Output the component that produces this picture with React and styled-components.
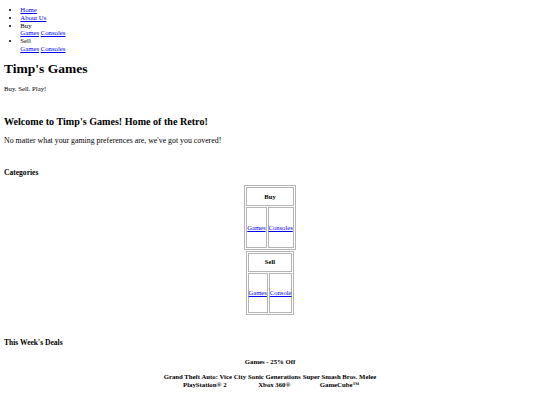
import React from 'react';
import styled, { createGlobalStyle } from 'styled-components';

const GlobalStyle = createGlobalStyle`
  html, body {
    margin: 0;
    padding: 0;
    background: #ffffff;
  }
  body {
    font-family: "Liberation Serif", "Times New Roman", serif;
    color: #000000;
  }
  a {
    color: #0000ee;
    text-decoration: underline;
  }
`;

const categories = [
  { title: 'Buy', links: ['Games', 'Consoles'] },
  { title: 'Sell', links: ['Games', 'Console'] },
];

const deals = [
  { game: 'Grand Theft Auto: Vice City', platform: 'PlayStation® 2' },
  { game: 'Sonic Generations', platform: 'Xbox 360®' },
  { game: 'Super Smash Bros. Melee', platform: 'GameCube™' },
];

const App = () => {
  return (
    <>
      <GlobalStyle />
      <Page>
        <nav>
          <NavList>
            <NavItem><a href="#">Home</a></NavItem>
            <NavItem><a href="#">About Us</a></NavItem>
            <NavItem>
              Buy
              <SubMenu><a href="#">Games</a> <a href="#">Consoles</a></SubMenu>
            </NavItem>
            <NavItem>
              Sell
              <SubMenu><a href="#">Games</a> <a href="#">Consoles</a></SubMenu>
            </NavItem>
          </NavList>
        </nav>

        <header>
          <SiteTitle>Timp's Games</SiteTitle>
          <Tagline>Buy. Sell. Play!</Tagline>
        </header>

        <main>
          <Welcome>Welcome to Timp's Games! Home of the Retro!</Welcome>
          <Intro>No matter what your gaming preferences are, we've got you covered!</Intro>

          <SectionTitle>Categories</SectionTitle>
          <CategoryList>
            {categories.map((cat) => (
              <CategoryTable key={cat.title}>
                <tbody>
                  <tr>
                    <CategoryHead colSpan={2}>{cat.title}</CategoryHead>
                  </tr>
                  <tr>
                    {cat.links.map((link) => (
                      <CategoryCell key={link}><a href="#">{link}</a></CategoryCell>
                    ))}
                  </tr>
                </tbody>
              </CategoryTable>
            ))}
          </CategoryList>

          <SectionTitle>This Week's Deals</SectionTitle>
          <DealsTable>
            <DealsCaption>Games - 25% Off</DealsCaption>
            <tbody>
              <tr>
                {deals.map((d) => <DealCell key={d.game}>{d.game}</DealCell>)}
              </tr>
              <tr>
                {deals.map((d) => <DealCell key={d.platform}>{d.platform}</DealCell>)}
              </tr>
            </tbody>
          </DealsTable>
        </main>
      </Page>
    </>
  );
};

export default App;

const Page = styled.div`
  padding: 0 4px;
`;

const NavList = styled.ul`
  margin: 0;
  padding: 6.1px 0 0 16.3px;
  list-style: disc;
  font-size: 6.75px;
  line-height: 7.75px;
`;

const NavItem = styled.li`
  margin: 0;
`;

const SubMenu = styled.div`
  display: block;
`;

const SiteTitle = styled.h1`
  margin: 8.1px 0 0;
  font-size: 13.5px;
  line-height: 15.5px;
  font-weight: bold;
`;

const Tagline = styled.p`
  margin: 9.25px 0 0;
  font-size: 6.75px;
  line-height: 7.75px;
`;

const Welcome = styled.h2`
  margin: 23.1px 0 0;
  font-size: 10.1px;
  line-height: 11.6px;
  font-weight: bold;
`;

const Intro = styled.p`
  margin: 8.45px 0 0;
  font-size: 7.85px;
  line-height: 9px;
`;

const SectionTitle = styled.h3`
  margin: 23.7px 0 0;
  font-size: 7.55px;
  line-height: 8.7px;
  font-weight: bold;
`;

const CategoryList = styled.div`
  display: flex;
  flex-direction: column;
  align-items: center;
  gap: 1px;
  margin-top: 7.5px;
`;

const CategoryTable = styled.table`
  border: 1px solid #b4b4b4;
  border-spacing: 1px;
  font-size: 6.6px;
  line-height: 7.75px;
`;

const CategoryHead = styled.th`
  padding: 4.6px 0;
  border: 1px solid #b4b4b4;
  font-weight: bold;
  text-align: center;
`;

const CategoryCell = styled.td`
  padding: 15.4px 0;
  border: 1px solid #b4b4b4;
  text-align: center;
  vertical-align: middle;
`;

const DealsTable = styled.table`
  margin: 10.55px auto 0;
  border-spacing: 0;
  font-size: 6.75px;
  line-height: 7.75px;
`;

const DealsCaption = styled.caption`
  padding-bottom: 7.25px;
  font-weight: bold;
`;

const DealCell = styled.th`
  padding: 0 1px;
  font-weight: bold;
  text-align: center;
`;
